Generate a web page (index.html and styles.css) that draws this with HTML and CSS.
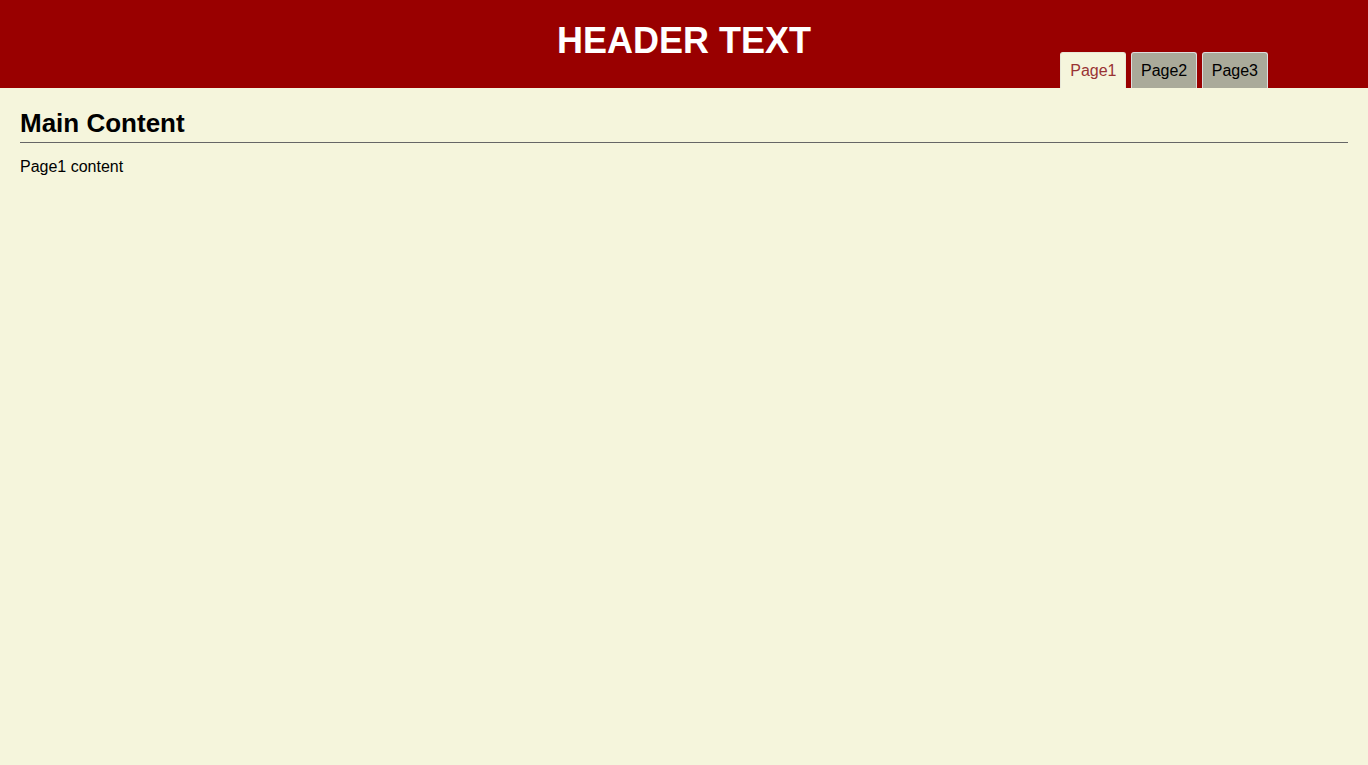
FILE: index.html
```html
<!DOCTYPE html>
<html>
<head>
<meta charset="utf-8">
<title>Tabs</title>
<link rel="stylesheet" href="styles.css">
</head>
<body>
<header class="header">
  <h1 class="title">HEADER TEXT</h1>
  <nav class="tabs">
    <a class="tab active" href="#">Page1</a>
    <a class="tab" href="#">Page2</a>
    <a class="tab" href="#">Page3</a>
  </nav>
</header>
<main class="main">
  <h2 class="heading">Main Content</h2>
  <p class="text">Page1 content</p>
</main>
</body>
</html>
```
FILE: styles.css
```css
html, body {
  margin: 0;
  padding: 0;
}
body {
  background: #f5f5dc;
  font-family: "Liberation Sans", Arial, sans-serif;
  color: #000;
  min-height: 765px;
}
.header {
  background: #990000;
  height: 88px;
  display: grid;
  grid-template-areas: "stack";
}
.title {
  grid-area: stack;
  align-self: start;
  justify-self: center;
  margin: 20px 0 0;
  color: #fff;
  font-size: 36px;
  font-weight: bold;
  line-height: 41px;
}
.tabs {
  grid-area: stack;
  align-self: end;
  justify-self: end;
  display: flex;
  gap: 4.5px;
  margin-right: 100px;
}
.tab {
  display: block;
  height: 35px;
  line-height: 35px;
  padding: 0 9px;
  border: 1px solid #ddd;
  border-bottom: 0;
  border-radius: 3px 3px 0 0;
  background: #aaaa9a;
  color: #000;
  text-decoration: none;
  font-size: 16px;
}
.tab.active {
  background: #f5f5dc;
  color: #993333;
  border-color: #e8e8d8;
}
.main {
  padding: 0 20px;
}
.heading {
  margin: 0;
  padding-top: 20px;
  font-size: 26px;
  line-height: 30px;
  font-weight: bold;
  border-bottom: 1px solid #666;
  padding-bottom: 4px;
}
.text {
  margin: 15px 0 0;
  font-size: 16px;
  line-height: 18px;
}
```
